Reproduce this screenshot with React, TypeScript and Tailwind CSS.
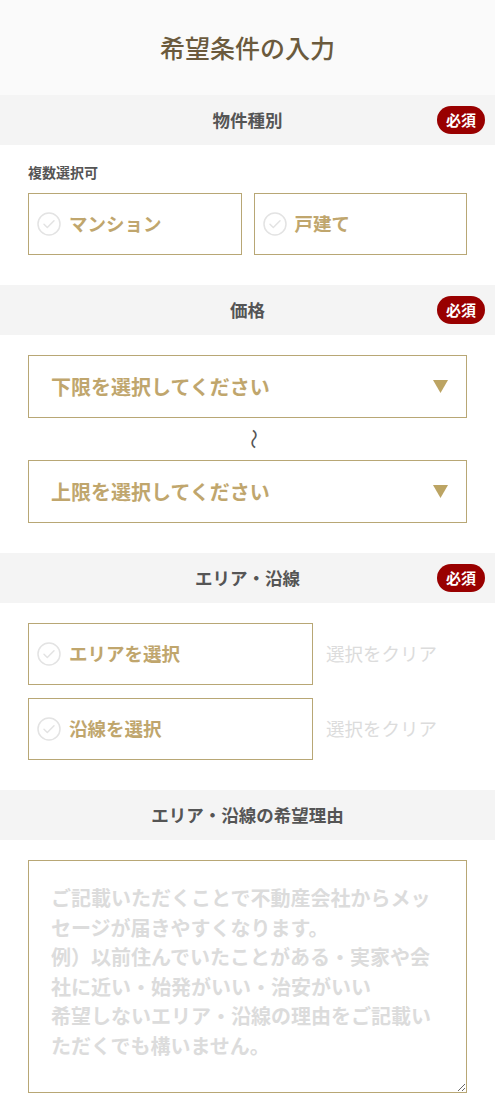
import type { ReactNode } from 'react';

const font = { fontFamily: '"Noto Sans CJK JP", "Noto Sans", sans-serif' };

function CheckCircle() {
  return (
    <svg width="24" height="24" viewBox="0 0 24 24" fill="none" className="shrink-0">
      <circle cx="12" cy="12" r="11" stroke="#e3e3e3" strokeWidth="1.5" />
      <path d="M7 12.2l3.3 3.3L17 8.8" stroke="#e3e3e3" strokeWidth="1.5" strokeLinecap="round" strokeLinejoin="round" />
    </svg>
  );
}

function Caret() {
  return (
    <svg width="15" height="13" viewBox="0 0 15 13" className="shrink-0">
      <path d="M0 0h15L7.5 13z" fill="#bca463" />
    </svg>
  );
}

function SectionHeader({ title, required }: { title: string; required?: boolean }) {
  return (
    <div className="relative flex h-[50px] items-center justify-center bg-[#f4f4f4]">
      <span className="text-[17.5px] font-bold text-[#555]">{title}</span>
      {required && (
        <span className="absolute right-[10px] top-1/2 -translate-y-1/2 rounded-full bg-[#990000] px-[9px] py-[3px] text-[15px] font-bold leading-[22px] text-white">
          必須
        </span>
      )}
    </div>
  );
}

function CheckButton({ children, className }: { children: ReactNode; className?: string }) {
  return (
    <button
      type="button"
      className={`flex h-[62px] items-center gap-[8px] border border-[#b8a775] bg-white pl-[8px] text-left ${className ?? ''}`}
    >
      <CheckCircle />
      <span className="text-[18.5px] font-bold text-[#c0a66d]">{children}</span>
    </button>
  );
}

function SelectBox({ label }: { label: string }) {
  return (
    <div className="flex h-[63px] items-center justify-between border border-[#b8a775] bg-white pl-[22px] pr-[18px]">
      <span className="text-[20px] font-bold text-[#c0a66d]">{label}</span>
      <Caret />
    </div>
  );
}

function ClearLink() {
  return <span className="text-[18.5px] text-[#dcdcdc]">選択をクリア</span>;
}

export default function App() {
  return (
    <div className="w-[495px] bg-white" style={font}>
      <div className="flex h-[95px] items-center justify-center bg-[#fafafa]">
        <h1 className="text-[25px] font-medium text-[#6b5a3d]">希望条件の入力</h1>
      </div>

      <SectionHeader title="物件種別" required />
      <div className="px-[28px] pb-[30px] pt-[17px]">
        <p className="text-[14px] font-bold text-[#555]">複数選択可</p>
        <div className="mt-[10px] grid grid-cols-2 gap-[12px]">
          <CheckButton>マンション</CheckButton>
          <CheckButton>戸建て</CheckButton>
        </div>
      </div>

      <SectionHeader title="価格" required />
      <div className="px-[28px] pb-[30px] pt-[20px]">
        <SelectBox label="下限を選択してください" />
        <div className="flex h-[42px] items-center justify-center pl-[13px]">
          <span className="inline-block rotate-90 text-[20px] leading-none text-[#555]">〜</span>
        </div>
        <SelectBox label="上限を選択してください" />
      </div>

      <SectionHeader title="エリア・沿線" required />
      <div className="flex flex-col gap-[13px] px-[28px] pb-[30px] pt-[20px]">
        <div className="flex items-center gap-[13px]">
          <CheckButton className="w-[285px]">エリアを選択</CheckButton>
          <ClearLink />
        </div>
        <div className="flex items-center gap-[13px]">
          <CheckButton className="w-[285px]">沿線を選択</CheckButton>
          <ClearLink />
        </div>
      </div>

      <SectionHeader title="エリア・沿線の希望理由" />
      <div className="px-[28px] pb-[14px] pt-[20px]">
        <textarea
          className="block h-[233px] w-full resize-y border border-[#b8a775] bg-white px-[22px] py-[22px] text-[20px] font-bold leading-[29.6px] text-[#555] outline-none placeholder:text-[#dcdcdc]"
          style={font}
          placeholder={
            'ご記載いただくことで不動産会社からメッセージが届きやすくなります。\n例）以前住んでいたことがある・実家や会社に近い・始発がいい・治安がいい\n希望しないエリア・沿線の理由をご記載いただくでも構いません。'
          }
        />
      </div>
    </div>
  );
}
